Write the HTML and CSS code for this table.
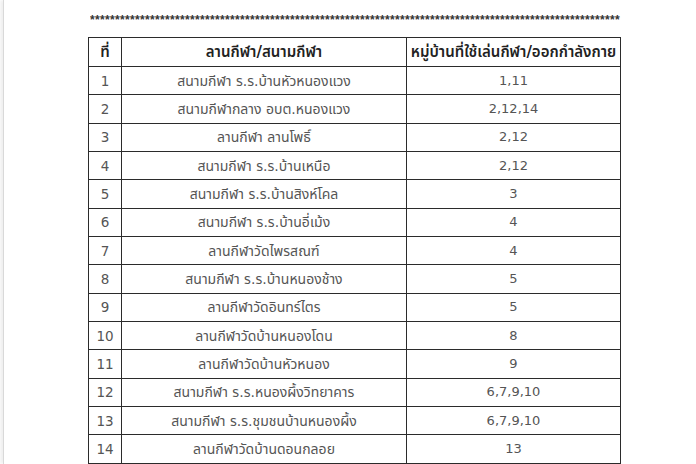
FILE: index.html
```html
<!DOCTYPE html>
<html lang="th">
<head>
<meta charset="utf-8">
<link rel="stylesheet" href="styles.css">
</head>
<body>
<div class="page">
  <div class="stars">**********************************************************************************************************</div>
  <table class="sports">
    <thead>
      <tr><th class="c-no">ที่</th><th class="c-name">ลานกีฬา/สนามกีฬา</th><th class="c-vil">หมู่บ้านที่ใช้เล่นกีฬา/ออกกำลังกาย</th></tr>
    </thead>
    <tbody>
      <tr><td>1</td><td>สนามกีฬา ร.ร.บ้านหัวหนองแวง</td><td>1,11</td></tr>
      <tr><td>2</td><td>สนามกีฬากลาง อบต.หนองแวง</td><td>2,12,14</td></tr>
      <tr><td>3</td><td>ลานกีฬา ลานโพธิ์</td><td>2,12</td></tr>
      <tr><td>4</td><td>สนามกีฬา ร.ร.บ้านเหนือ</td><td>2,12</td></tr>
      <tr><td>5</td><td>สนามกีฬา ร.ร.บ้านสิงห์โคล</td><td>3</td></tr>
      <tr><td>6</td><td>สนามกีฬา ร.ร.บ้านอี่เม้ง</td><td>4</td></tr>
      <tr><td>7</td><td>ลานกีฬาวัดไพรสณฑ์</td><td>4</td></tr>
      <tr><td>8</td><td>สนามกีฬา ร.ร.บ้านหนองช้าง</td><td>5</td></tr>
      <tr><td>9</td><td>ลานกีฬาวัดอินทร์ไตร</td><td>5</td></tr>
      <tr><td>10</td><td>ลานกีฬาวัดบ้านหนองโดน</td><td>8</td></tr>
      <tr><td>11</td><td>ลานกีฬาวัดบ้านหัวหนอง</td><td>9</td></tr>
      <tr><td>12</td><td>สนามกีฬา ร.ร.หนองผึ้งวิทยาคาร</td><td>6,7,9,10</td></tr>
      <tr><td>13</td><td>สนามกีฬา ร.ร.ชุมชนบ้านหนองผึ้ง</td><td>6,7,9,10</td></tr>
      <tr><td>14</td><td>ลานกีฬาวัดบ้านดอนกลอย</td><td>13</td></tr>
    </tbody>
  </table>
</div>
</body>
</html>
```
FILE: styles.css
```css
html, body {
  margin: 0;
  padding: 0;
  background: #ffffff;
}
body {
  font-family: "DejaVu Sans", "Noto Sans Thai", "Noto Sans", sans-serif;
  height: 464px;
  overflow: hidden;
}
.page {
  margin-left: 3px;
  border-left: 1px solid #d9d9d9;
  box-shadow: -3px 0 3px #f0f0f0;
  height: 464px;
  padding: 14px 0 0 84px;
  box-sizing: border-box;
}
.stars {
  width: 532px;
  overflow: hidden;
  white-space: nowrap;
  font-family: "Liberation Sans", sans-serif;
  font-size: 12px;
  font-weight: bold;
  line-height: 12px;
  letter-spacing: 0.33px;
  color: #333;
  margin-left: 2px;
}
.sports {
  margin-top: 11px;
  border-collapse: collapse;
  width: 533px;
  table-layout: fixed;
  color: #555;
  font-size: 14px;
}
.sports th, .sports td {
  border: 1px solid #2b2b2b;
  text-align: center;
  padding: 0;
  height: 27.35px;
  line-height: 16px;
  white-space: nowrap;
}
.sports td:first-child {
  font-size: 13.5px;
}
.sports td:last-child {
  font-size: 13px;
}
.sports th {
  height: 28px;
  color: #222;
  font-weight: 600;
  font-size: 15px;
}
.c-no { width: 32px; }
.c-name { width: 284px; }
.c-vil { width: auto; }
```
